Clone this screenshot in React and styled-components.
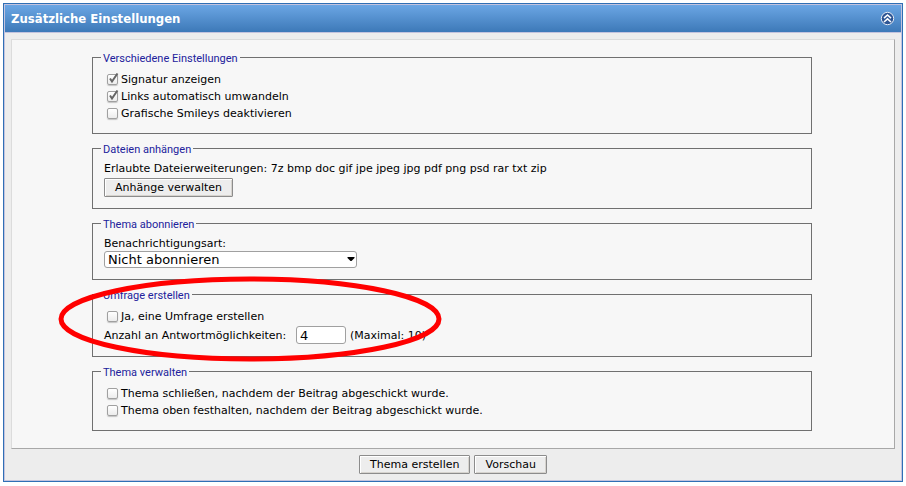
import React, { useState } from "react";
import styled, { createGlobalStyle } from "styled-components";

function App() {
  const [collapsed, setCollapsed] = useState(false);
  const [notify, setNotify] = useState("none");
  const [options, setOptions] = useState("4");

  return (
    <>
      <GlobalStyle />
      <Box>
        <Header>
          <h1>Zusätzliche Einstellungen</h1>
          <CollapseButton
            type="button"
            aria-label="Einklappen"
            onClick={() => setCollapsed(!collapsed)}
          >
            <CollapseIcon />
          </CollapseButton>
        </Header>
        <Form onSubmit={(e) => e.preventDefault()}>
          {!collapsed && (
            <Panel>
              <Groups>
                <Group>
                  <legend>Verschiedene Einstellungen</legend>
                  <CheckRow label="Signatur anzeigen" defaultChecked />
                  <CheckRow label="Links automatisch umwandeln" defaultChecked />
                  <CheckRow label="Grafische Smileys deaktivieren" />
                </Group>
                <Group>
                  <legend>Dateien anhängen</legend>
                  <Text>
                    Erlaubte Dateierweiterungen: 7z bmp doc gif jpe jpeg jpg pdf
                    png psd rar txt zip
                  </Text>
                  <AttachRow>
                    <Button type="button">Anhänge verwalten</Button>
                  </AttachRow>
                </Group>
                <Group>
                  <legend>Thema abonnieren</legend>
                  <Text as="label" htmlFor="notify">
                    Benachrichtigungsart:
                  </Text>
                  <SelectWrapper>
                    <select
                      id="notify"
                      value={notify}
                      onChange={(e) => setNotify(e.target.value)}
                    >
                      <option value="none">Nicht abonnieren</option>
                    </select>
                    <svg width="8" height="5" viewBox="0 0 8 5">
                      <path d="M0.500 0h7v1L4.500 4h-1L0.500 1z" fill="#000" />
                    </svg>
                  </SelectWrapper>
                </Group>
                <Group>
                  <legend>Umfrage erstellen</legend>
                  <CheckRow label="Ja, eine Umfrage erstellen" />
                  <PollRow>
                    <label htmlFor="polloptions">
                      Anzahl an Antwortmöglichkeiten:
                    </label>
                    <input
                      id="polloptions"
                      type="text"
                      value={options}
                      onChange={(e) => setOptions(e.target.value)}
                    />
                    <span>(Maximal: 10)</span>
                  </PollRow>
                  <Marker viewBox="0 0 384 86">
                    <ellipse cx="192" cy="43" rx="189" ry="40" />
                  </Marker>
                </Group>
                <Group>
                  <legend>Thema verwalten</legend>
                  <CheckRow label="Thema schließen, nachdem der Beitrag abgeschickt wurde." />
                  <CheckRow label="Thema oben festhalten, nachdem der Beitrag abgeschickt wurde." />
                </Group>
              </Groups>
            </Panel>
          )}
          <Footer>
            <Button type="submit">Thema erstellen</Button>
            <Button type="button">Vorschau</Button>
          </Footer>
        </Form>
      </Box>
    </>
  );
}

function CheckRow({ label, defaultChecked = false }) {
  const [checked, setChecked] = useState(defaultChecked);

  return (
    <CheckLabel>
      <CheckBox>
        <input
          type="checkbox"
          checked={checked}
          onChange={(e) => setChecked(e.target.checked)}
        />
        {checked && (
          <svg width="12" height="12" viewBox="0 0 12 12">
            <path d="M3 5.500L5 8.500L10.500 0.500" />
          </svg>
        )}
      </CheckBox>
      {label}
    </CheckLabel>
  );
}

function CollapseIcon() {
  return (
    <svg width="15" height="15" viewBox="0 0 15 15" fill="none">
      <circle cx="7.500" cy="7.500" r="6.200" fill="#2d5594" stroke="#e6ebf4" />
      <path
        d="M4 7.200L7.500 4L11 7.200M4 11L7.500 7.800L11 11"
        stroke="#fff"
        strokeWidth="1.600"
      />
    </svg>
  );
}

const GlobalStyle = createGlobalStyle`
  * {
    box-sizing: border-box;
  }
  body {
    margin: 3px;
    background: #fff;
    color: #000;
    font-family: "DejaVu Sans", Verdana, sans-serif;
    font-size: 11px;
  }
`;

const Box = styled.div`
  border: 1px solid #2f6fb5;
  background: #ededed;
`;

const Header = styled.div`
  display: flex;
  align-items: center;
  justify-content: space-between;
  height: 29px;
  padding: 0 6px;
  border: 1px solid #c3c3de;
  background: linear-gradient(#6ba6e4, #3d79b8);
  h1 {
    margin: 0;
    color: #fff;
    font-family: "DejaVu Sans Condensed", "DejaVu Sans", Tahoma, sans-serif;
    font-size: 13px;
    font-weight: bold;
  }
`;

const CollapseButton = styled.button`
  display: flex;
  padding: 0;
  border: none;
  background: none;
  cursor: pointer;
`;

const Form = styled.form`
  padding: 6px 6px 0;
  border: 1px solid #c3c3de;
  border-top: none;
`;

const Panel = styled.div`
  padding: 10px 80px 17px;
  border: 1px solid;
  border-color: #dcdcdc #a8a8a8 #a8a8a8 #dcdcdc;
  background: #f7f7f7;
`;

const Groups = styled.div`
  display: flex;
  flex-direction: column;
  gap: 7px;
  max-width: 720px;
`;

const Group = styled.fieldset`
  position: relative;
  min-width: 0;
  margin: 0;
  padding: 6px 11px 11px;
  border: 1px solid #707070;
  legend {
    margin-left: -3px;
    padding: 2px 2px 0;
    color: #22229c;
    font-family: Roboto, Tahoma, sans-serif;
    line-height: 13px;
  }
`;

const Text = styled.div`
  display: block;
  line-height: 14px;
`;

const CheckLabel = styled.label`
  display: flex;
  align-items: center;
  height: 17px;
`;

const CheckBox = styled.span`
  position: relative;
  display: flex;
  margin: 0 3px;
  input {
    appearance: none;
    width: 11px;
    height: 11px;
    margin: 0;
    border: 1px solid #a0a0a0;
    border-radius: 2px;
    background: linear-gradient(#fff, #ececec);
    box-shadow: 0 1px 1px #c4c4c4;
  }
  svg {
    position: absolute;
    top: -1px;
    left: 0;
    fill: none;
    stroke: #666;
    stroke-width: 2;
    pointer-events: none;
  }
`;

const Button = styled.button`
  height: 19px;
  padding: 0 10px;
  border: 1px solid #8c8c8c;
  border-radius: 1px;
  background: #ededed;
  box-shadow: inset 1px 1px #fff, inset -1px -1px #d6d3ce;
  color: #000;
  font-family: inherit;
  font-size: 11px;
  line-height: 17px;
`;

const AttachRow = styled.div`
  display: flex;
  padding-top: 2px;
`;

const SelectWrapper = styled.div`
  position: relative;
  width: 253px;
  select {
    appearance: none;
    display: block;
    width: 100%;
    height: 17px;
    padding: 0 16px 0 3px;
    border: 1px solid #a0a0a0;
    border-radius: 3px;
    background: #fff;
    color: #000;
    font-family: inherit;
    font-size: 13px;
    line-height: 15px;
  }
  svg {
    position: absolute;
    top: 6px;
    right: 2px;
    pointer-events: none;
  }
`;

const PollRow = styled.div`
  display: flex;
  align-items: center;
  gap: 4px;
  height: 20px;
  white-space: nowrap;
  label {
    min-width: 188px;
  }
  input {
    width: 50px;
    height: 18px;
    padding: 0 3px;
    border: 1px solid #a0a0a0;
    border-radius: 3px;
    background: #fff;
    font-family: inherit;
    font-size: 13px;
  }
`;

/* hand drawn ring around the poll settings */
const Marker = styled.svg`
  position: absolute;
  top: -26px;
  left: -35px;
  width: 384px;
  height: 86px;
  fill: none;
  stroke: #f00;
  stroke-width: 5;
  pointer-events: none;
`;

const Footer = styled.div`
  display: flex;
  justify-content: center;
  gap: 4px;
  padding: 6px 0;
`;

export default App;
